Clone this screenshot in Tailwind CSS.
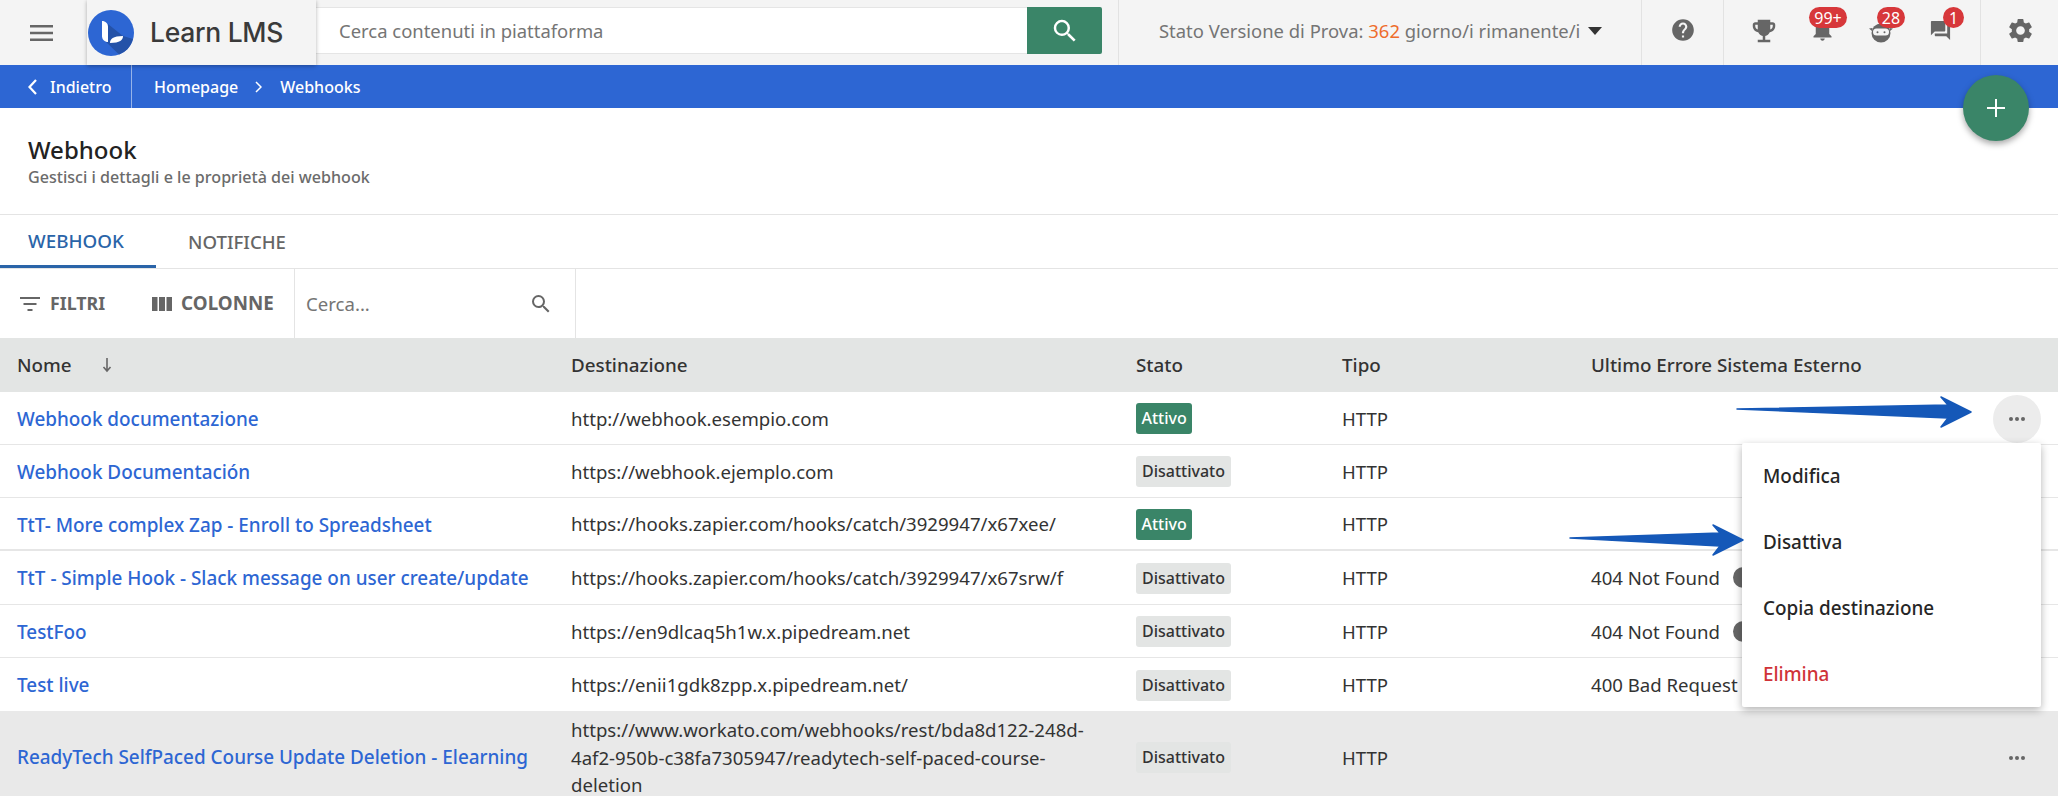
<!DOCTYPE html>
<html lang="it">
<head>
<meta charset="utf-8">
<title>Webhook</title>
<script src="https://cdn.jsdelivr.net/npm/@tailwindcss/browser@4"></script>
</head>
<body class="relative w-[2058px] h-[796px] overflow-hidden bg-white font-['Noto_Sans',sans-serif] text-[18.6px] text-[#333]">

<header class="relative flex h-[65px] items-start bg-[#f4f4f4] text-[18.45px]">
  <div class="flex h-[65px] w-[87px] shrink-0 items-center pl-[30px]">
    <svg class="w-[23px] h-[16px]" viewBox="0 0 23 16"><path d="M0 0h23v2.400H0zM0 6.800h23v2.400H0zM0 13.600h23V16H0z" fill="#666"/></svg>
  </div>
  <div class="z-10 flex h-[65px] w-[229px] shrink-0 items-center gap-[16px] bg-[#f4f4f4] pl-[1px] shadow-[0_1px_4px_rgba(0,0,0,0.3)]">
    <svg class="w-[46px] h-[46px]" viewBox="0 0 46 46">
      <circle cx="23" cy="23" r="23" fill="#2d66d3"/>
      <path d="M20 14 L35 26 L45 29 A23 23 0 0 1 31 44.500 L14 28 Z" fill="#2452a8"/>
      <path d="M14 11c3.500 0 6 2.500 6 6v15c-3.500 0-6-2.500-6-6z" fill="#fff"/>
      <path d="M22 33c0-4 3-7 13-7 0 4-3 7-13 7z" fill="#fff"/>
    </svg>
    <span class="font-['Inter',sans-serif] text-[26.5px] font-medium leading-none tracking-[-0.3px] text-[#3a3a3a]">Learn LMS</span>
  </div>
  <div class="mt-[7px] flex h-[47px] w-[711px] shrink-0 items-center border-y border-[#e5e5e5] bg-white pl-[23px] text-[#757575]">Cerca contenuti in piattaforma</div>
  <button class="mt-[7px] flex h-[47px] w-[75px] shrink-0 items-center justify-center rounded-r-[2px] bg-[#3a8568]">
    <svg class="w-[30px] h-[30px]" viewBox="0 0 24 24"><path fill="#fff" d="M15.500 14h-.79l-.28-.27A6.470 6.470 0 0 0 16 9.500 6.500 6.500 0 1 0 9.500 16c1.610 0 3.090-.59 4.230-1.570l.27.28v.79l5 4.990L20.490 19l-4.990-5zm-6 0C7.010 14 5 11.990 5 9.500S7.010 5 9.500 5 14 7.010 14 9.500 11.990 14 9.500 14z"/></svg>
  </button>
  <div class="ml-[16px] flex h-[65px] w-[524px] shrink-0 items-center border-x border-[#e2e2e2] pb-[4px] pl-[40px] text-[#757575]">
    <span>Stato Versione di Prova: <span class="text-[#ee6c2b]">362</span> giorno/i rimanente/i</span>
    <svg class="ml-[8px] w-[14px] h-[8px]" viewBox="0 0 14 8"><path d="M0 0h14L7 8z" fill="#333"/></svg>
  </div>
  <div class="flex h-[65px] w-[81px] shrink-0 items-center justify-center pb-[5px]">
    <svg class="w-[26px] h-[26px]" viewBox="0 0 24 24"><path fill="#666" d="M12 2C6.480 2 2 6.480 2 12s4.480 10 10 10 10-4.480 10-10S17.520 2 12 2zm1 17h-2v-2h2v2zm2.070-7.750l-.9.92C13.450 12.900 13 13.500 13 15h-2v-.5c0-1.100.45-2.100 1.170-2.830l1.240-1.260c.37-.36.59-.86.59-1.410 0-1.100-.9-2-2-2s-2 .9-2 2H8c0-2.210 1.790-4 4-4s4 1.790 4 4c0 .88-.36 1.680-.93 2.250z"/></svg>
  </div>
  <div class="relative h-[65px] w-[258px] shrink-0 border-x border-[#e2e2e2]">
    <svg class="absolute left-[25px] top-[16px] w-[30px] h-[30px]" viewBox="0 0 24 24"><path fill="#666" d="M19 5h-2V3H7v2H5c-1.100 0-2 .9-2 2v1c0 2.550 1.920 4.630 4.390 4.940.63 1.500 1.980 2.630 3.610 2.960V19H7v2h10v-2h-4v-3.100c1.630-.33 2.980-1.460 3.610-2.960C19.080 12.630 21 10.550 21 8V7c0-1.100-.9-2-2-2zM5 8V7h2v3.820C5.840 10.400 5 9.300 5 8zm14 0c0 1.300-.84 2.400-2 2.820V7h2v1z"/></svg>
    <svg class="absolute left-[85px] top-[16px] w-[27px] h-[27px]" viewBox="0 0 24 24"><path fill="#666" d="M12 22c1.100 0 2-.9 2-2h-4c0 1.100.89 2 2 2zm6-6v-5c0-3.070-1.640-5.640-4.500-6.320V4c0-.83-.67-1.500-1.500-1.500s-1.500.67-1.500 1.500v.68C7.630 5.360 6 7.920 6 11v5l-2 2v1h16v-1l-2-2z"/></svg>
    <svg class="absolute left-[145px] top-[23px] w-[24px] h-[20px]" viewBox="0 0 24 20">
      <circle cx="12" cy="10" r="9.500" fill="#666"/>
      <path d="M3 8 L0 5.500 L3.500 5z M21 8 L24 5.500 L20.500 5z" fill="#666"/>
      <rect x="4" y="5.500" width="16" height="7" rx="3.500" fill="#f4f4f4"/>
      <rect x="7.500" y="8.200" width="2" height="2" rx="1" fill="#666"/>
      <rect x="14.500" y="8.200" width="2" height="2" rx="1" fill="#666"/>
    </svg>
    <svg class="absolute left-[205px] top-[19px] w-[23px] h-[23px]" viewBox="0 0 24 24"><path fill="#666" d="M21 6h-2v9H6v2c0 .55.45 1 1 1h11l4 4V7c0-.55-.45-1-1-1zm-4 6V3c0-.55-.45-1-1-1H3c-.55 0-1 .45-1 1v14l4-4h10c.55 0 1-.45 1-1z"/></svg>
    <span class="absolute left-[85px] top-[7px] flex h-[21px] w-[38px] items-center justify-center rounded-[10.5px] bg-[#d7373a] text-[16px] leading-none text-white">99+</span>
    <span class="absolute left-[153px] top-[7px] flex h-[21px] w-[28px] items-center justify-center rounded-[10.5px] bg-[#d7373a] text-[16px] leading-none text-white">28</span>
    <span class="absolute left-[219px] top-[7px] flex h-[21px] w-[21px] items-center justify-center rounded-full bg-[#d7373a] text-[16px] leading-none text-white">1</span>
  </div>
  <div class="flex h-[65px] flex-1 items-center pb-[4px] pl-[25px]">
    <svg class="w-[29px] h-[29px]" viewBox="0 0 24 24"><path fill="#666" d="M19.140 12.940c.04-.3.06-.61.06-.94 0-.32-.02-.64-.07-.94l2.030-1.580c.18-.14.23-.41.12-.61l-1.920-3.320c-.12-.22-.37-.29-.59-.22l-2.390.96c-.5-.38-1.030-.7-1.620-.94l-.36-2.540c-.04-.24-.24-.41-.48-.41h-3.840c-.24 0-.43.17-.47.41l-.36 2.540c-.59.24-1.130.57-1.620.94l-2.390-.96c-.22-.08-.47 0-.59.22L2.740 8.870c-.12.21-.08.47.12.61l2.030 1.580c-.05.3-.09.63-.09.94s.02.64.07.94l-2.030 1.580c-.18.14-.23.41-.12.61l1.920 3.320c.12.22.37.29.59.22l2.390-.96c.5.38 1.030.7 1.620.94l.36 2.540c.05.24.24.41.48.41h3.840c.24 0 .44-.17.47-.41l.36-2.540c.59-.24 1.130-.56 1.620-.94l2.390.96c.22.08.47 0 .59-.22l1.920-3.320c.12-.22.07-.47-.12-.61l-2.010-1.580zM12 15.600c-1.980 0-3.600-1.620-3.600-3.600s1.620-3.600 3.600-3.600 3.600 1.620 3.600 3.600-1.620 3.600-3.600 3.600z"/></svg>
  </div>
</header>

<nav class="flex h-[43px] items-center bg-[#2d66d3] text-[16px] font-medium text-white">
  <div class="flex h-full w-[132px] items-center border-r border-white/50 pl-[28px]">
    <svg class="mr-[13px] w-[9px] h-[16px]" viewBox="0 0 9 16"><path d="M8 1 1.500 8 8 15" fill="none" stroke="#fff" stroke-width="2.200"/></svg>
    Indietro
  </div>
  <span class="ml-[22px]">Homepage</span>
  <svg class="ml-[17px] mr-[18px] w-[7px] h-[12px]" viewBox="0 0 7 12"><path d="M1 1l5 5-5 5" fill="none" stroke="#fff" stroke-width="1.500"/></svg>
  <span>Webhooks</span>
</nav>

<section class="h-[107px] border-b border-[#e4e4e4] pl-[28px] pt-[25px]">
  <h1 class="text-[24px] font-medium leading-[33px] text-[#222]">Webhook</h1>
  <p class="text-[16.1px] font-medium leading-[22px] text-[#6b6b6b]">Gestisci i dettagli e le proprietà dei webhook</p>
</section>

<div class="flex h-[54px] items-stretch border-b border-[#e4e4e4] text-[18.6px] font-medium">
  <div class="flex w-[156px] items-center border-b-[3px] border-[#2a64a8] pl-[28px] pt-[3px] text-[18.8px] text-[#2a64a8]">WEBHOOK</div>
  <div class="flex items-center pl-[32px] text-[#666]">NOTIFICHE</div>
</div>

<div class="flex h-[69px] items-stretch font-bold text-[#666]">
  <div class="flex w-[295px] items-center border-r border-[#e4e4e4] pl-[20px]">
    <svg class="w-[20px] h-[14px]" viewBox="0 0 20 14"><path d="M0 0h20v2H0zM3.500 6h13v2h-13zM7.500 12h5v2h-5z" fill="#666"/></svg>
    <span class="ml-[10px] text-[17.8px]">FILTRI</span>
    <svg class="ml-[47px] w-[20px] h-[14px]" viewBox="0 0 20 14"><path d="M0 0h5.500v14H0zM7 0h6v14H7zM14.500 0H20v14h-5.500z" fill="#666"/></svg>
    <span class="ml-[9px] text-[18.8px]">COLONNE</span>
  </div>
  <div class="flex w-[281px] items-center border-r border-[#e4e4e4] pl-[11px] font-normal text-[#757575]">
    <span class="flex-1">Cerca...</span>
    <svg class="mr-[22px] w-[24px] h-[24px]" viewBox="0 0 24 24"><path fill="#666" d="M15.500 14h-.79l-.28-.27A6.470 6.470 0 0 0 16 9.500 6.500 6.500 0 1 0 9.500 16c1.610 0 3.090-.59 4.230-1.570l.27.28v.79l5 4.990L20.490 19l-4.990-5zm-6 0C7.010 14 5 11.990 5 9.500S7.010 5 9.500 5 14 7.010 14 9.500 11.990 14 9.500 14z"/></svg>
  </div>
</div>

<div class="flex h-[54px] items-center bg-[#e3e5e4] text-[18.8px] font-medium text-[#333]">
  <div class="flex w-[571px] items-center pl-[17px]">Nome
    <svg class="ml-[29px] w-[12px] h-[16px]" viewBox="0 0 12 16"><path d="M6 1v12M2.500 10 6 14l3.500-4" fill="none" stroke="#666" stroke-width="1.600"/></svg>
  </div>
  <div class="w-[565px]">Destinazione</div>
  <div class="w-[206px]">Stato</div>
  <div class="w-[249px]">Tipo</div>
  <div>Ultimo Errore Sistema Esterno</div>
</div>

<div class="flex h-[53px] items-center border-b border-[#e6e6e6] pt-[1px]">
  <a class="w-[571px] pl-[17px] pt-[2px] text-[18.9px] font-medium text-[#2d66d3]">Webhook documentazione</a>
  <div class="w-[565px]">http://webhook.esempio.com</div>
  <div class="w-[206px]"><span class="inline-block rounded-[3px] bg-[#3a8568] px-[5.5px] text-[16px] font-medium leading-[31px] text-white">Attivo</span></div>
  <div class="w-[249px]">HTTP</div>
</div>
<div class="flex h-[53px] items-center border-b border-[#e6e6e6] pt-[1px]">
  <a class="w-[571px] pl-[17px] pt-[2px] text-[18.9px] font-medium text-[#2d66d3]">Webhook Documentación</a>
  <div class="w-[565px]">https://webhook.ejemplo.com</div>
  <div class="w-[206px]"><span class="inline-block rounded-[3px] bg-[#e3e5e4] px-[6px] text-[16px] font-medium leading-[31px]">Disattivato</span></div>
  <div class="w-[249px]">HTTP</div>
</div>
<div class="flex h-[53px] items-center border-b-2 border-[#e6e6e6] pt-[1px]">
  <a class="w-[571px] pl-[17px] pt-[2px] text-[18.9px] font-medium text-[#2d66d3]">TtT- More complex Zap - Enroll to Spreadsheet</a>
  <div class="w-[565px]">https://hooks.zapier.com/hooks/catch/3929947/x67xee/</div>
  <div class="w-[206px]"><span class="inline-block rounded-[3px] bg-[#3a8568] px-[5.5px] text-[16px] font-medium leading-[31px] text-white">Attivo</span></div>
  <div class="w-[249px]">HTTP</div>
</div>
<div class="flex h-[54px] items-center border-b border-[#e6e6e6] pt-[1px]">
  <a class="w-[571px] pl-[17px] text-[18.9px] font-medium text-[#2d66d3]">TtT - Simple Hook - Slack message on user create/update</a>
  <div class="w-[565px]">https://hooks.zapier.com/hooks/catch/3929947/x67srw/f</div>
  <div class="w-[206px]"><span class="inline-block rounded-[3px] bg-[#e3e5e4] px-[6px] text-[16px] font-medium leading-[31px]">Disattivato</span></div>
  <div class="w-[249px]">HTTP</div>
  <div class="flex items-center gap-[13px]">404 Not Found<span class="h-[21px] w-[21px] rounded-full bg-[#666]"></span></div>
</div>
<div class="flex h-[53px] items-center border-b border-[#e6e6e6] pt-[1px]">
  <a class="w-[571px] pl-[17px] pt-[2px] text-[18.9px] font-medium text-[#2d66d3]">TestFoo</a>
  <div class="w-[565px]">https://en9dlcaq5h1w.x.pipedream.net</div>
  <div class="w-[206px]"><span class="inline-block rounded-[3px] bg-[#e3e5e4] px-[6px] text-[16px] font-medium leading-[31px]">Disattivato</span></div>
  <div class="w-[249px]">HTTP</div>
  <div class="flex items-center gap-[13px]">404 Not Found<span class="h-[21px] w-[21px] rounded-full bg-[#666]"></span></div>
</div>
<div class="flex h-[53px] items-center pt-[1px]">
  <a class="w-[571px] pl-[17px] text-[18.9px] font-medium text-[#2d66d3]">Test live</a>
  <div class="w-[565px]">https://enii1gdk8zpp.x.pipedream.net/</div>
  <div class="w-[206px]"><span class="inline-block rounded-[3px] bg-[#e3e5e4] px-[6px] text-[16px] font-medium leading-[31px]">Disattivato</span></div>
  <div class="w-[249px]">HTTP</div>
  <div>400 Bad Request</div>
</div>
<div class="flex h-[93px] items-center bg-[#e9e9e9]">
  <a class="w-[571px] pl-[17px] text-[18.9px] font-medium text-[#2d66d3]">ReadyTech SelfPaced Course Update Deletion - Elearning</a>
  <div class="w-[565px] pr-[40px] leading-[27.5px]">https://www.workato.com/webhooks/rest/bda8d122-248d-4af2-950b-c38fa7305947/readytech-self-paced-course-deletion</div>
  <div class="w-[206px]"><span class="inline-block rounded-[3px] bg-[#e3e5e4] px-[6px] text-[16px] font-medium leading-[31px]">Disattivato</span></div>
  <div class="w-[249px]">HTTP</div>
  <div class="ml-auto mr-[17px] flex w-[48px] items-center justify-center gap-[2px]"><i class="h-[4px] w-[4px] rounded-full bg-[#666]"></i><i class="h-[4px] w-[4px] rounded-full bg-[#666]"></i><i class="h-[4px] w-[4px] rounded-full bg-[#666]"></i></div>
</div>

<button class="absolute left-[1963px] top-[75px] flex h-[66px] w-[66px] items-center justify-center rounded-full bg-[#3a8568] shadow-[0_3px_6px_rgba(0,0,0,0.35)]">
  <svg class="w-[18px] h-[18px]" viewBox="0 0 18 18"><path d="M8 0h2v8h8v2h-8v8H8v-8H0V8h8z" fill="#fff"/></svg>
</button>

<div class="absolute left-[1993px] top-[395px] flex h-[48px] w-[48px] items-center justify-center gap-[2px] rounded-full bg-[#ececec]"><i class="h-[4px] w-[4px] rounded-full bg-[#666]"></i><i class="h-[4px] w-[4px] rounded-full bg-[#666]"></i><i class="h-[4px] w-[4px] rounded-full bg-[#666]"></i></div>

<ul class="absolute left-[1742px] top-[443px] w-[299px] rounded-[2px] bg-white text-[18.9px] font-medium text-[#262626] shadow-[0_3px_8px_rgba(0,0,0,0.3)]">
  <li class="flex h-[66px] items-center pl-[21px]">Modifica</li>
  <li class="flex h-[66px] items-center pl-[21px]">Disattiva</li>
  <li class="flex h-[66px] items-center pl-[21px]">Copia destinazione</li>
  <li class="flex h-[66px] items-center pl-[21px] text-[#cf3338]">Elimina</li>
</ul>

<svg class="absolute left-[1735px] top-[394px] w-[240px] h-[36px]" viewBox="0 0 240 36"><path d="M2 15 L213 11 L206 3 L236 18 L206 33 L213 24 Z" fill="#1558b8" stroke="#1558b8" stroke-width="1.500" stroke-linejoin="round"/></svg>
<svg class="absolute left-[1568px] top-[522px] w-[178px] h-[37px]" viewBox="0 0 178 37"><path d="M2 16 L152 11 L145 3 L175 18 L145 33 L152 24 Z" fill="#1558b8" stroke="#1558b8" stroke-width="1.500" stroke-linejoin="round"/></svg>

</body>
</html>
